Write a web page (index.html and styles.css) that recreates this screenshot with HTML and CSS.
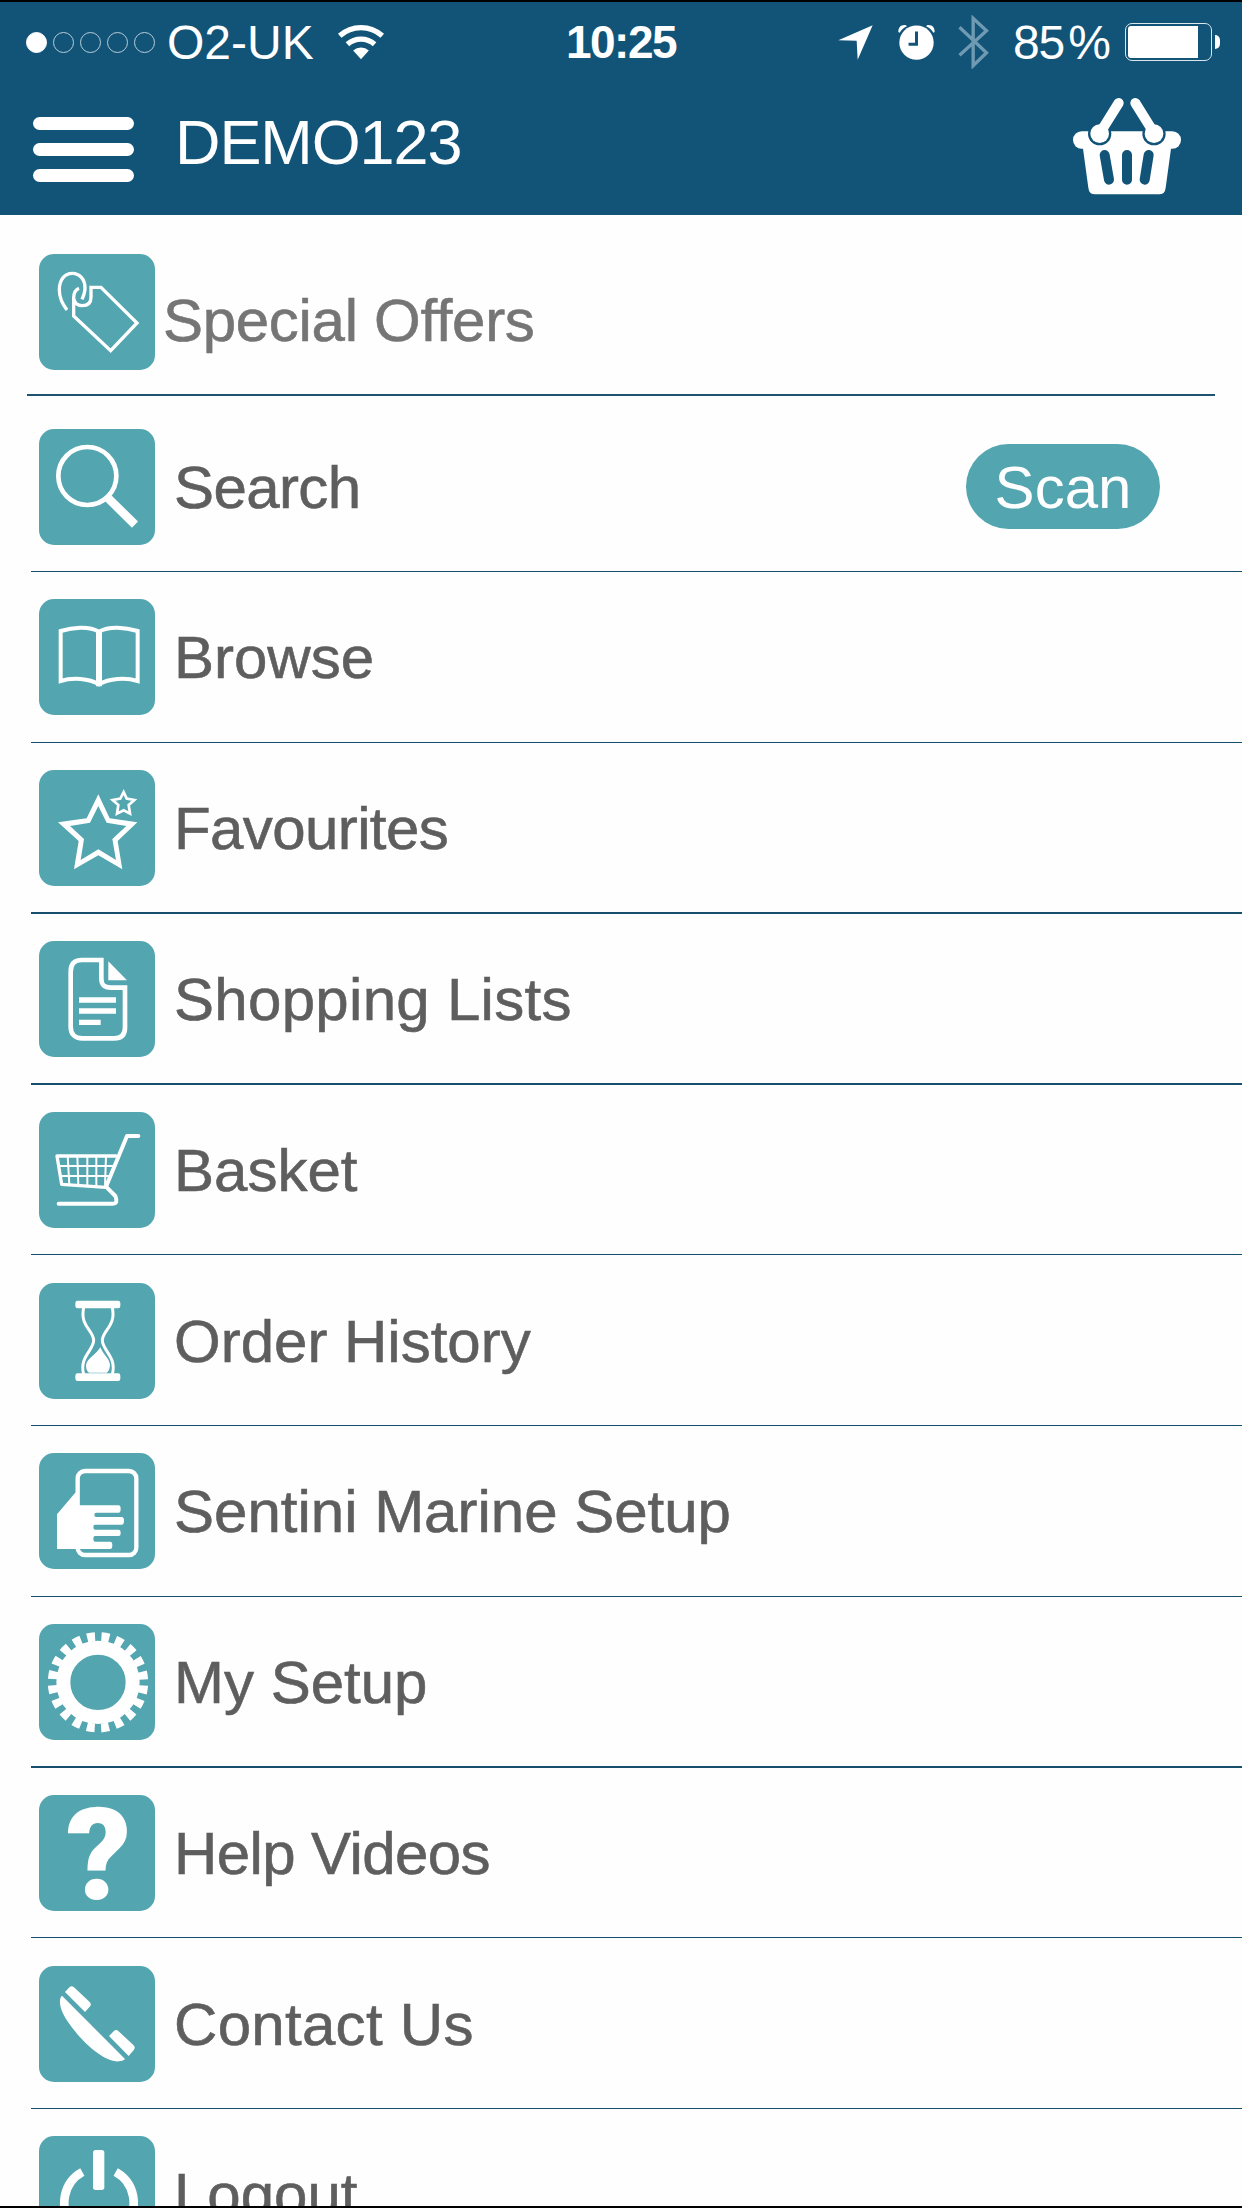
FILE: index.html
```html
<!DOCTYPE html>
<html lang="en">

<head>
    <meta charset="UTF-8">
    <meta name="viewport" content="width=device-width, initial-scale=1.0">
    <link rel="stylesheet" href="styles.css">
    <title>Menu</title>
</head>

<body>
    <header>
        <div class="status">
            <div class="status-left">
                <div class="signal">
                    <i class="dot full"></i>
                    <i class="dot"></i>
                    <i class="dot"></i>
                    <i class="dot"></i>
                    <i class="dot"></i>
                </div>
                <span class="carrier">O2-UK</span>
                <svg class="wifi" viewBox="0 0 146 110">
                    <path class="line w16" d="M8 36A97 97 0 0 1 138 36M31.500 62A62 62 0 0 1 114.500 62" />
                    <path class="solid" d="M49 81A36 36 0 0 1 97 81L73 108Z" />
                </svg>
            </div>
            <div class="time">10:25</div>
            <div class="status-right">
                <svg class="location" viewBox="0 0 105 105">
                    <path class="solid" d="M1 46L104 1L59 104L56 47Z" />
                </svg>
                <svg class="alarm" viewBox="0 0 112 108">
                    <path class="solid" d="M1 24C1 10 8 1 24 3L27 6Q12 12 5 26ZM111 24C111 10 104 1 88 3L85 6Q100 12 107 26Z" />
                    <circle class="solid" cx="56" cy="56" r="52" />
                    <path class="cut w9" d="M32 61H56V22" />
                </svg>
                <svg class="bluetooth" viewBox="0 0 92 162">
                    <path d="M4 121L85 47L45 10V152L85 113L4 37" />
                </svg>
                <span class="percent">85<b>%</b></span>
                <div class="battery"><i></i></div>
                <i class="nub"></i>
            </div>
        </div>

        <div class="bar">
            <div class="burger">
                <i></i>
                <i></i>
                <i></i>
            </div>
            <h1>DEMO123</h1>
            <svg class="basket" viewBox="0 0 324 294">
                <rect class="solid" y="103" width="324" height="52" rx="26" />
                <path class="solid" d="M28 140L46 272Q48 292 66 292H258Q276 292 278 272L296 140Z" />
                <path class="cut w30 round" d="M95 174L108 248M162 174V248M227 174L215 248" />
                <circle class="blue" cx="80" cy="110" r="35" />
                <circle class="blue" cx="243" cy="110" r="35" />
                <path class="line w30 round" d="M137 18L82 106M187 18L242 106" />
                <circle class="solid" cx="80" cy="110" r="28" />
                <circle class="solid" cx="243" cy="110" r="28" />
            </svg>
        </div>
    </header>

    <div class="offers">
        <svg class="icon" viewBox="0 0 348 348">
            <path class="line w10" d="M84 168C70 150 61 130 61 108C61 76 78 58 100 58C122 58 138 76 138 102C138 115 134 125 129 136" />
            <path class="line w10" d="M120 103C108 108 104 120 104 132C106 148 118 155 130 155C148 155 156 146 156 130V100H186L294 207L215 290L104 186V130" />
        </svg>
        <span>Special Offers</span>
    </div>

    <ul class="menu">
        <li class="search">
            <svg class="icon" viewBox="0 0 348 348">
                <circle class="line w14" cx="145" cy="141" r="87" />
                <path class="line w26" d="M204 204L288 287" />
            </svg>
            <span class="tight">Search</span>
            <button class="scan">Scan</button>
        </li>
        <li>
            <svg class="icon" viewBox="0 0 348 348">
                <path class="line w12" d="M65 96C100 85 150 80 180 98C210 80 260 85 296 96V246C260 235 210 238 180 256C150 238 100 235 65 246Z" />
                <path class="line w18" d="M180 98V262" />
            </svg>
            <span>Browse</span>
        </li>
        <li class="thick">
            <svg class="icon" viewBox="0 0 348 348">
                <path class="solid" d="M178 73L212 145L295 157L236 213L250 298L178 256L105 298L119 213L57 157L143 145ZM178 108L153 158L93 168L135 207L125 270L178 238L231 270L220 207L262 168L203 158Z" />
                <path class="line w8" d="M254 66L263 86L286 90L269 105L273 131L254 121L234 131L238 105L221 90L244 86Z" />
            </svg>
            <span class="tight">Favourites</span>
        </li>
        <li class="thick">
            <svg class="icon" viewBox="0 0 348 348">
                <path class="line w14" d="M187 57H128C105 57 95 70 95 92V257C95 280 108 292 130 292H225C248 292 258 280 258 260V140H215C195 140 187 132 187 112Z" />
                <path class="solid" d="M208 61L264 118H208Z" />
                <path class="line w16" d="M120 177H231M120 210H231M120 244H185" />
            </svg>
            <span class="loose">Shopping Lists</span>
        </li>
        <li class="short">
            <svg class="icon" viewBox="0 0 348 348">
                <path class="line w12 round" d="M298 72H264L201 224L229 252Q238 275 222 275H59" />
                <path class="line w10 round" d="M231 132H54L68 217L201 226" />
                <path class="line w6" d="M86 132L91 217M115 132L118 219M145 132V222M172 132V224M201 132L198 220M58 162H224M64 192H212" />
            </svg>
            <span>Basket</span>
        </li>
        <li class="low">
            <svg class="icon" viewBox="0 0 348 348">
                <rect class="solid" x="109" y="53" width="135" height="23" rx="7" />
                <rect class="solid" x="109" y="271" width="135" height="23" rx="7" />
                <path class="line w9" d="M134 74C122 130 164 142 164 172C164 202 120 222 134 274M220 74C232 130 190 142 190 172C190 202 234 222 220 274" />
                <path class="solid" d="M184 193C192 215 214 228 213 248Q212 262 204 269H150Q141 262 141 248C142 228 168 218 184 193Z" />
            </svg>
            <span>Order History</span>
        </li>
        <li>
            <svg class="icon" viewBox="0 0 348 348">
                <rect class="line w13" x="116" y="54" width="176" height="252" rx="22" />
                <path class="solid" d="M110 118L54 184V288H214Q220 288 220 277Q220 266 214 266H168Q163 266 163 258Q163 249 168 249H239Q245 249 245 240Q245 230 239 230H168Q163 230 163 222Q163 215 168 215H248Q255 215 255 203Q255 192 248 192H172Q166 192 166 186Q166 179 172 179H239Q245 179 245 168Q245 157 239 157H120Z" />
            </svg>
            <span>Sentini Marine Setup</span>
        </li>
        <li class="thick">
            <svg class="icon" viewBox="0 0 348 348">
                <circle class="line w42" cx="177" cy="175" r="104" />
                <circle class="line teeth" cx="177" cy="175" r="137" pathLength="40" />
            </svg>
            <span>My Setup</span>
        </li>
        <li class="short">
            <svg class="icon" viewBox="0 0 348 348">
                <text class="mark" x="179" y="313">?</text>
            </svg>
            <span class="tight">Help Videos</span>
        </li>
        <li class="low">
            <svg class="icon" viewBox="0 0 348 348">
                <path class="solid" d="M69 89C57 100 62 130 85 165C125 225 195 290 240 286Q254 284 258 279Z" />
                <path class="solid" d="M78 78L92 63Q98 58 105 64L152 108Q158 114 154 120L138 138ZM210 210L224 196Q231 189 238 195L283 237Q290 243 285 251L269 270Z" />
            </svg>
            <span class="loose">Contact Us</span>
        </li>
        <li>
            <svg class="icon" viewBox="0 0 348 348">
                <rect class="solid" x="162" y="42" width="34" height="120" rx="8" />
                <path class="line w26" d="M130 108A104 104 0 1 0 230 108" />
            </svg>
            <span>Logout</span>
        </li>
    </ul>
</body>

</html>
```
FILE: styles.css
```css
* {
    margin: 0;
    padding: 0;
    box-sizing: border-box;
}

html {
    height: 2208px;
    overflow: hidden;
}

body {
    width: 1242px;
    height: 2208px;
    overflow: hidden;
    border-top: 2px solid black;
    border-bottom: 2px solid black;
    background-color: #fefefe;
    font-family: "Liberation Sans", Arial, sans-serif;
    font-size: 60px;
    color: #5e5e5e;
}

header {
    height: 213px;
    background-color: #115478;
    color: white;
}

svg,
i {
    display: block;
    flex-shrink: 0;
}

/* status bar */
.status {
    display: grid;
    grid-template-columns: 1fr auto 1fr;
    align-items: center;
    height: 80px;
    padding: 0 22px 0 26px;
    font-size: 48px;
}

.status-left,
.status-right,
.signal {
    display: flex;
    align-items: center;
}

.signal {
    gap: 6px;
}

.dot {
    width: 21px;
    height: 21px;
    border: 1px solid #b9cdd9;
    border-radius: 50%;
}

.dot.full {
    background-color: white;
    border-color: white;
}

.carrier {
    margin-left: 12px;
}

.wifi {
    width: 48px;
    height: 36px;
    margin-left: 23px;
}

.time {
    padding-right: 4px;
    font-size: 46px;
    font-weight: bold;
    letter-spacing: -1.5px;
}

.status-right {
    justify-content: flex-end;
}

.location {
    width: 35px;
    height: 35px;
}

.alarm {
    width: 37px;
    height: 36px;
    margin-left: 25px;
}

.bluetooth {
    width: 31px;
    height: 54px;
    margin-left: 23px;
}

.bluetooth path {
    fill: none;
    stroke: #6f9ab2;
    stroke-width: 10;
}

.percent {
    margin-left: 24px;
    letter-spacing: -1px;
}

.percent b {
    margin-left: 4px;
    font-weight: normal;
}

.battery {
    width: 87px;
    height: 38px;
    padding: 2px;
    margin-left: 15px;
    border: 1px solid #dbe6ec;
    border-radius: 7px;
}

.battery i {
    width: 70px;
    height: 32px;
    border-radius: 3px 0 0 3px;
    background-color: white;
}

.nub {
    width: 5px;
    height: 14px;
    margin-left: 3px;
    border-radius: 0 5px 5px 0;
    background-color: white;
}

/* title bar */
.bar {
    display: flex;
    padding: 0 61px 0 33px;
}

.burger {
    display: flex;
    flex-direction: column;
    gap: 13px;
    padding-top: 35px;
}

.burger i {
    width: 101px;
    height: 13px;
    border-radius: 7px;
    background-color: white;
}

h1 {
    margin-left: 41px;
    padding-top: 25px;
    font-size: 63px;
    font-weight: normal;
    letter-spacing: -1.1px;
    line-height: 70px;
}

.basket {
    width: 108px;
    height: 98px;
    margin: 15px 0 0 auto;
}

/* icons */
.icon {
    width: 116px;
    height: 116px;
    border-radius: 15px;
    background-color: #53a5b0;
}

.solid {
    fill: white;
    fill-rule: evenodd;
}

.blue {
    fill: #115478;
}

.line {
    fill: none;
    stroke: white;
}

.cut {
    fill: none;
    stroke: #115478;
}

.round {
    stroke-linecap: round;
    stroke-linejoin: round;
}

.w6 { stroke-width: 6; }
.w8 { stroke-width: 8; }
.w9 { stroke-width: 9; }
.w10 { stroke-width: 10; }
.w12 { stroke-width: 12; }
.w13 { stroke-width: 13; }
.w14 { stroke-width: 14; }
.w16 { stroke-width: 16; }
.w18 { stroke-width: 18; }
.w26 { stroke-width: 26; }
.w30 { stroke-width: 30; }
.w42 { stroke-width: 42; }

.teeth {
    stroke-width: 27;
    stroke-dasharray: 1.1 0.9;
    transform: rotate(4deg);
    transform-origin: 177px 175px;
}

.mark {
    font-family: Roboto, sans-serif;
    font-size: 384px;
    font-weight: 900;
    text-anchor: middle;
    fill: white;
}

/* menu */
.offers {
    display: flex;
    height: 181px;
    margin: 0 27px;
    padding: 39px 0 0 12px;
    border-bottom: 2px solid #1a5470;
    color: #757575;
    letter-spacing: -0.3px;
    -webkit-text-stroke: 0.6px;
}

.offers span {
    padding: 32px 0 0 8px;
}

.menu {
    list-style: none;
    margin-left: 31px;
    -webkit-text-stroke: 0.6px;
}

.menu li {
    display: flex;
    height: 171px;
    padding: 27px 82px 0 8px;
    border-bottom: 1px solid #174e6b;
    line-height: 118px;
}

.menu li.search {
    height: 176px;
    padding-top: 33px;
}

.menu li.thick {
    border-bottom-width: 2px;
}

.menu li.short {
    height: 170px;
}

.menu li.low {
    padding-top: 28px;
}

.menu span {
    padding-left: 19px;
}

.menu .tight {
    letter-spacing: -0.6px;
}

.menu .loose {
    letter-spacing: 0.3px;
}

.menu .scan {
    width: 194px;
    height: 85px;
    margin: 15px 0 0 auto;
    border: none;
    border-radius: 43px;
    background-color: #53a5b0;
    font: inherit;
    line-height: 87px;
    color: white;
    -webkit-text-stroke: 0;
}

.icon text {
    -webkit-text-stroke: 0;
}
```
